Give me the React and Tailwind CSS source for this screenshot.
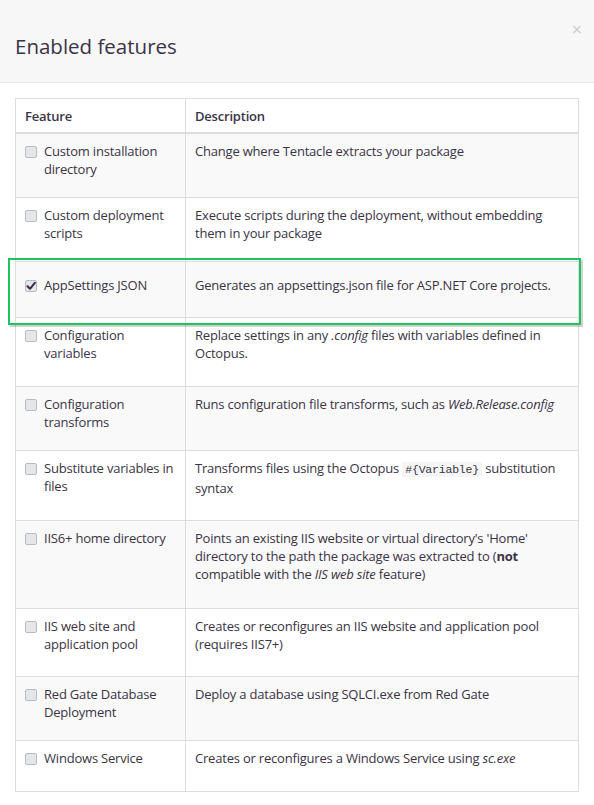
import React from "react";

const rows = [
  { f: <>Custom installation<br />directory</>, d: <>Change where Tentacle extracts your package</>, h: "h-[63px]", s: true },
  { f: <>Custom deployment<br />scripts</>, d: <>Execute scripts during the deployment, without embedding<br />them in your package</>, h: "h-[64px]", s: false },
  { f: <>AppSettings JSON</>, d: <>Generates an appsettings.json file for ASP.NET Core projects.</>, h: "h-[56px]", s: true, checked: true, pt: "pt-[14px]" },
  { f: <>Configuration<br />variables</>, d: <>Replace settings in any <i>.config</i> files with variables defined in<br />Octopus.</>, h: "h-[69px]", s: false },
  { f: <>Configuration<br />transforms</>, d: <>Runs configuration file transforms, such as <i>Web.Release.config</i></>, h: "h-[64px]", s: true },
  { f: <>Substitute variables in<br />files</>, d: <>Transforms files using the Octopus <code className="font-['Liberation_Mono',monospace] text-[11.5px] bg-[#f5f5f5] px-[3px] py-[1px]">#{"{"}Variable{"}"}</code> substitution<br />syntax</>, h: "h-[70px]", s: false },
  { f: <>IIS6+ home directory</>, d: <>Points an existing IIS website or virtual directory's 'Home'<br />directory to the path the package was extracted to (<b>not</b><br />compatible with the <i>IIS web site</i> feature)</>, h: "h-[88px]", s: true },
  { f: <>IIS web site and<br />application pool</>, d: <>Creates or reconfigures an IIS website and application pool<br />(requires IIS7+)</>, h: "h-[68px]", s: false },
  { f: <>Red Gate Database<br />Deployment</>, d: <>Deploy a database using SQLCI.exe from Red Gate</>, h: "h-[64px]", s: true },
  { f: <>Windows Service</>, d: <>Creates or reconfigures a Windows Service using <i>sc.exe</i></>, h: "h-[51px]", s: false },
];

function Checkbox({ checked }) {
  return (
    <span className="mt-[4px] flex h-[12px] w-[12px] shrink-0 items-center justify-center rounded-[2px] border border-[#b4bcc8] bg-[#e4e6e8]">
      {checked && (
        <svg width="10" height="10" viewBox="0 0 10 10">
          <path d="M1.5 5.2 L4 7.8 L8.8 1.8" fill="none" stroke="#3a2a44" strokeWidth="2" strokeLinecap="round" strokeLinejoin="round" />
        </svg>
      )}
    </span>
  );
}

export default function App() {
  return (
    <div className="relative h-[805px] w-[594px] overflow-hidden bg-white font-['Open_Sans',sans-serif] text-[#333]">
      <div className="relative flex h-[83px] items-center border-b border-[#e5e5e5] bg-[#f7f7f7] pl-[15px] pt-[11px]">
        <h1 className="text-[20.5px] font-normal leading-none text-[#3a3346]">Enabled features</h1>
        <span className="absolute right-[12px] top-[20px] text-[18px] leading-none text-[#c8ccd0]">×</span>
      </div>
      <div className="px-[15px] pt-[15px]">
        <div className="border border-[#dddddd] text-[13px] leading-[18px] tracking-[-0.2px]">
          <div className="grid h-[35px] grid-cols-[170px_1fr] border-b-2 border-[#dddddd] font-semibold text-[#3a3346]">
            <div className="flex items-center border-r border-[#dddddd] pl-[9px]">Feature</div>
            <div className="flex items-center pl-[9px]">Description</div>
          </div>
          {rows.map((r, i) => (
            <div
              key={i}
              className={`grid grid-cols-[170px_1fr] ${r.h} ${i > 0 ? "border-t border-[#dddddd]" : ""} ${r.s ? "bg-[#f9f9f9]" : "bg-white"}`}
            >
              <div className={`flex gap-[7px] border-r border-[#dddddd] pl-[9px] ${r.pt || "pt-[8px]"}`}>
                <Checkbox checked={r.checked} />
                <span className="text-[#3a3346]">{r.f}</span>
              </div>
              <div className={`pl-[9px] pr-[6px] text-[#3a3346] ${r.pt || "pt-[8px]"}`}>{r.d}</div>
            </div>
          ))}
        </div>
      </div>
      <div className="absolute left-[8px] top-[258px] h-[67px] w-[573px] border-2 border-[#1dc45e] shadow-[2px_2px_0_rgba(0,0,0,0.18)]" />
    </div>
  );
}
